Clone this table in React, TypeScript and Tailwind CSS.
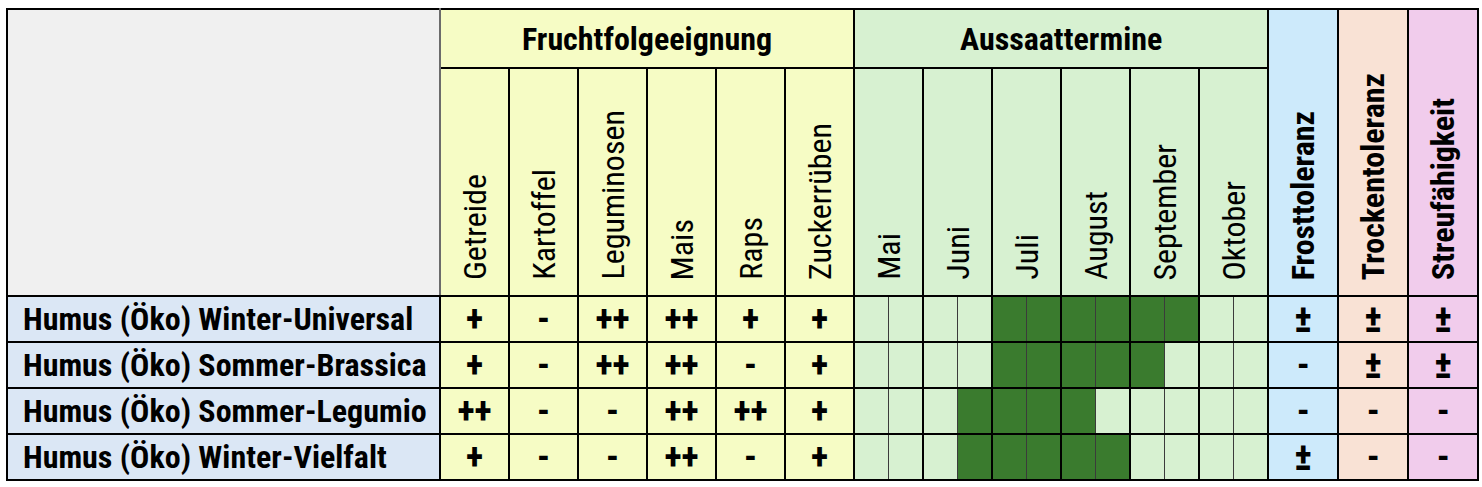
const crops = ["Getreide", "Kartoffel", "Leguminosen", "Mais", "Raps", "Zuckerrüben"];
const months = ["Mai", "Juni", "Juli", "August", "September", "Oktober"];

type Row = {
  name: string;
  fruit: string[];
  from: number;
  to: number;
  frost: string;
  trocken: string;
  streu: string;
};

const rows: Row[] = [
  { name: "Humus (Öko) Winter-Universal", fruit: ["+", "-", "++", "++", "+", "+"], from: 4, to: 9, frost: "±", trocken: "±", streu: "±" },
  { name: "Humus (Öko) Sommer-Brassica", fruit: ["+", "-", "++", "++", "-", "+"], from: 4, to: 8, frost: "-", trocken: "±", streu: "±" },
  { name: "Humus (Öko) Sommer-Legumio", fruit: ["++", "-", "-", "++", "++", "+"], from: 3, to: 6, frost: "-", trocken: "-", streu: "-" },
  { name: "Humus (Öko) Winter-Vielfalt", fruit: ["+", "-", "-", "++", "-", "+"], from: 3, to: 7, frost: "±", trocken: "-", streu: "-" },
];

const halves = Array.from({ length: 12 }, (_, i) => i);

const Vertical = ({ text, bold }: { text: string; bold?: boolean }) => (
  <div className="flex justify-center">
    <span
      className={`[writing-mode:vertical-rl] rotate-180 whitespace-nowrap leading-none text-[32px] ${
        bold ? "font-bold" : "font-normal"
      }`}
    >
      {text}
    </span>
  </div>
);

// ± is drawn a bit larger, as in the sheet
const Mark = ({ v }: { v: string }) => (v === "±" ? <span className="text-[38px]">±</span> : <>{v}</>);

export default function App() {
  return (
    <div className="w-[1482px] h-[487px] bg-white pt-2 pl-1.5 font-['Roboto',sans-serif] font-stretch-condensed text-black">
      <table className="table-fixed border-collapse w-[1471px] border-2 border-black">
        <colgroup>
          <col className="w-[433px]" />
          {crops.map((c) => (
            <col key={c} className="w-[69px]" />
          ))}
          {halves.map((h) => (
            <col key={h} className="w-[34.5px]" />
          ))}
          <col className="w-[70px]" />
          <col className="w-[70px]" />
          <col className="w-[70px]" />
        </colgroup>
        <thead>
          <tr className="h-[59px]">
            <th rowSpan={2} className="bg-[#f0f0f0] border-2 border-black border-r-[#6b6b6b]" />
            <th colSpan={6} className="bg-[#f6fcc5] border-2 border-black text-[32px] font-bold leading-none">
              Fruchtfolgeeignung
            </th>
            <th colSpan={12} className="bg-[#d7f1d1] border-2 border-black text-[32px] font-bold leading-none">
              Aussaattermine
            </th>
            <th rowSpan={2} className="bg-[#cdeafb] border-2 border-black align-bottom pb-[15px]">
              <Vertical text="Frosttoleranz" bold />
            </th>
            <th rowSpan={2} className="bg-[#f9e2d5] border-2 border-black align-bottom pb-[15px]">
              <Vertical text="Trockentoleranz" bold />
            </th>
            <th rowSpan={2} className="bg-[#f1ccec] border-2 border-black align-bottom pb-[15px]">
              <Vertical text="Streufähigkeit" bold />
            </th>
          </tr>
          <tr className="h-[228px]">
            {crops.map((c) => (
              <th key={c} className="bg-[#f6fcc5] border-2 border-black align-bottom pb-[15px]">
                <Vertical text={c} />
              </th>
            ))}
            {months.map((m) => (
              <th key={m} colSpan={2} className="bg-[#d7f1d1] border-2 border-black align-bottom pb-[15px]">
                <Vertical text={m} />
              </th>
            ))}
          </tr>
        </thead>
        <tbody>
          {rows.map((r) => (
            <tr key={r.name} className="h-[46px]">
              <td className="bg-[#dbe7f5] border-2 border-black pl-[15px] text-[32px] font-bold leading-none whitespace-nowrap">
                {r.name}
              </td>
              {r.fruit.map((v, i) => (
                <td key={i} className="bg-[#f6fcc5] border-2 border-black text-center text-[36px] font-bold leading-none">
                  {v}
                </td>
              ))}
              {halves.map((h) => (
                <td
                  key={h}
                  className={`border-y-2 border-y-black border-r-0 ${
                    h % 2 === 0 ? "border-l-2 border-l-black" : "border-l border-l-[#3b3b3b]"
                  } ${h >= r.from && h <= r.to ? "bg-[#3a7b2e]" : "bg-[#d7f1d1]"}`}
                />
              ))}
              <td className="bg-[#cdeafb] border-2 border-black text-center text-[36px] font-bold leading-none">
                <Mark v={r.frost} />
              </td>
              <td className="bg-[#f9e2d5] border-2 border-black text-center text-[36px] font-bold leading-none">
                <Mark v={r.trocken} />
              </td>
              <td className="bg-[#f1ccec] border-2 border-black text-center text-[36px] font-bold leading-none">
                <Mark v={r.streu} />
              </td>
            </tr>
          ))}
        </tbody>
      </table>
    </div>
  );
}
